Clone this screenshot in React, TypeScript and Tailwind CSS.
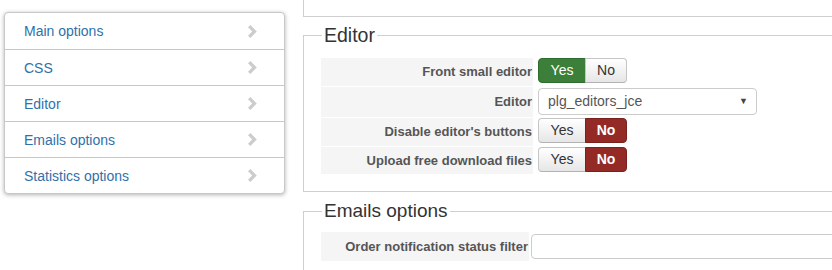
import React from "react"

const MENU = ["Main options", "CSS", "Editor", "Emails options", "Statistics options"]

function Chevron() {
  return (
    <svg width="10" height="13" viewBox="0 0 10 13" className="shrink-0">
      <polygon points="0,2.2 2.4,0 8.8,6.5 2.4,13 0,10.8 4.2,6.5" fill="#cccccc" />
    </svg>
  )
}

function Toggle({ value }: { value: "yes" | "no" }) {
  const yesOn = value === "yes"
  return (
    <div className="flex h-[25px] text-[14px]">
      <span
        className={`flex w-[48px] items-center justify-center rounded-l-[4px] border ${
          yesOn
            ? "border-[#2f6d2f] bg-[#3b7f3a] text-white"
            : "border-[#c5c5c5] border-b-[#b3b3b3] bg-gradient-to-b from-white to-[#e6e6e6] text-[#333]"
        }`}
      >
        Yes
      </span>
      <span
        className={`-ml-px flex w-[42px] items-center justify-center rounded-r-[4px] border ${
          yesOn
            ? "border-[#c5c5c5] border-b-[#b3b3b3] bg-gradient-to-b from-white to-[#e6e6e6] text-[#333]"
            : "border-[#7a211d] bg-[#942a25] font-bold text-white"
        }`}
      >
        No
      </span>
    </div>
  )
}

function Row({
  label,
  height,
  children,
}: {
  label: string
  height: string
  children: React.ReactNode
}) {
  return (
    <div className={`flex ${height}`}>
      <div className="flex w-[212px] shrink-0 items-center justify-end bg-[#f5f5f5] pr-[1px] text-[13px] font-bold text-[#555]">
        {label}
      </div>
      <div className="pl-[5px]">{children}</div>
    </div>
  )
}

export default function App() {
  return (
    <div className="flex h-[270px] w-[832px] overflow-hidden bg-white font-['Liberation_Sans',Arial,sans-serif]">
      {/* left menu */}
      <div className="ml-[4px] mt-[12px] w-[281px] shrink-0 self-start rounded-[4px] border border-[#c8c8c8] bg-white shadow-[0_1px_4px_rgba(0,0,0,0.3)]">
        {MENU.map((item, i) => (
          <div
            key={item}
            className={`flex h-[36px] items-center justify-between pl-[19px] pr-[26px] text-[14px] text-[#3071a9] ${
              i > 0 ? "border-t border-[#c8c8c8]" : ""
            }`}
          >
            <span className="pt-px">{item}</span>
            <Chevron />
          </div>
        ))}
      </div>

      {/* right column */}
      <div className="ml-[18px] w-[560px] shrink-0">
        <div className="h-[17px] border-b border-l border-[#cfcfcf]" />

        <fieldset className="mt-[6px] border border-[#cfcfcf] pb-[17px] pl-[17px]">
          <legend className="ml-[1px] px-[2px] text-[19.5px] leading-[24px] text-[#333]">Editor</legend>
          <div className="mt-[11px] flex flex-col gap-[1px]">
            <Row label="Front small editor" height="h-[28px]">
              <Toggle value="yes" />
            </Row>
            <Row label="Editor" height="h-[30px]">
              <div className="mt-[1px] flex h-[27px] w-[219px] items-center justify-between rounded-[4px] border border-[#ccc] bg-white pl-[9px] pr-[8px] text-[14px] text-[#555]">
                <span>plg_editors_jce</span>
                <span className="text-[9px] text-[#444]">▼</span>
              </div>
            </Row>
            <Row label="Disable editor's buttons" height="h-[28px]">
              <Toggle value="no" />
            </Row>
            <Row label="Upload free download files" height="h-[27px]">
              <Toggle value="no" />
            </Row>
          </div>
        </fieldset>

        <fieldset className="mt-[7px] border border-[#cfcfcf] pb-[17px] pl-[17px]">
          <legend className="ml-[1px] px-[2px] text-[19px] leading-[24px] text-[#333]">Emails options</legend>
          <div className="mt-[9px] flex h-[29px]">
            <div className="flex w-[208px] shrink-0 items-center justify-end bg-[#f5f5f5] pr-[1px] text-[13px] font-bold text-[#555]">
              Order notification status filter
            </div>
            <div className="ml-[2px] mt-[2px] h-[25px] flex-1 rounded-[4px] border border-[#ccc] bg-white" />
          </div>
        </fieldset>
      </div>
    </div>
  )
}
